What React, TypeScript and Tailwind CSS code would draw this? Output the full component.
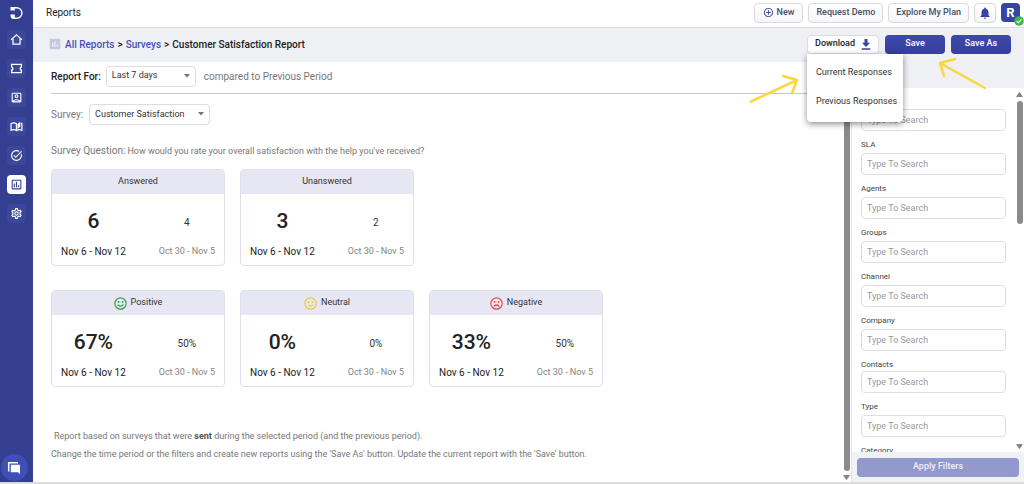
import type { ReactNode } from "react";
import {
  MdAddCircleOutline,
  MdInsertChart,
  MdNotifications,
  MdOutlineAccountBox,
  MdOutlineInsertChart,
  MdOutlineSettings,
  MdTaskAlt,
} from "react-icons/md";

const HomeIcon = () => (
  <svg viewBox="0 0 24 24" className="size-[13px]" fill="none" stroke="currentColor" strokeWidth="2.3">
    <path d="M2 12.500 12 3.500l10 9" />
    <path d="M5.500 10v10.500h13V10" />
  </svg>
);

const TicketIcon = () => (
  <svg viewBox="0 0 24 24" className="size-[13px]" fill="none" stroke="currentColor" strokeWidth="2.5">
    <path d="M3 4.500h18v4.300a3.400 3.400 0 0 0 0 6.400v4.300H3v-4.300a3.400 3.400 0 0 0 0-6.400z" />
  </svg>
);

const BookIcon = () => (
  <svg viewBox="0 0 24 24" className="size-[13px]" fill="none" stroke="currentColor" strokeWidth="2.200">
    <path d="M12 7C9 5 5 5 2 6.500v12.500c3-1.500 7-1.500 10 .5V7z" />
    <path d="M12 19.500c3-2 7-2 10-.5V6.500l-2-.8" />
    <path d="M14 7.500 19 3v9.500l-5 4z" fill="currentColor" stroke="none" />
    <path d="M12 7v12.500" />
  </svg>
);

const LogoIcon = () => (
  <svg viewBox="0 0 14 14" className="size-3.5" fill="none">
    <path d="M5 1.700h2.700a5.200 5.200 0 0 1 0 10.500H5" stroke="#fff" strokeWidth="1.400" />
    <path d="M1.500 1h4.300v3.500H1.500z" fill="#fff" />
    <path d="M1.500 8.600h4.300v4.300H5A3.500 3.500 0 0 1 1.500 9.400z" fill="#fff" />
  </svg>
);

const ChatIcon = () => (
  <svg viewBox="0 0 14 14" className="size-3.5" fill="none">
    <path d="M1.700 10.500V1.700h9.300" stroke="#fff" strokeWidth="1.500" />
    <path d="M3.800 3.800h9.200v9.400l-2-1.900H3.800z" fill="#fff" />
  </svg>
);

const DownloadIcon = () => (
  <svg viewBox="0 0 10 11" className="h-[11px] w-2.5 fill-[#3743a4]">
    <path d="M3.500 0h3v3.800h2.600L5 8 .9 3.800h2.600zM.7 9.200h8.600v1.600H.7z" />
  </svg>
);

const Face = ({ mouth, className }: { mouth: string; className: string }) => (
  <svg viewBox="0 0 13 13" className={`size-[13px] ${className}`} fill="none" stroke="currentColor" strokeWidth="1.200" strokeLinecap="round">
    <circle cx="6.500" cy="6.500" r="5.700" />
    <path d={mouth} />
    <circle cx="4.500" cy="5" r=".9" fill="currentColor" stroke="none" />
    <circle cx="8.500" cy="5" r=".9" fill="currentColor" stroke="none" />
  </svg>
);

const Caret = ({ className = "" }: { className?: string }) => (
  <svg viewBox="0 0 6 4" className={`h-1 w-1.5 fill-[#757575] ${className}`}>
    <path d="M0 0h6L3 3.500z" />
  </svg>
);

const ScrollArrow = ({ className = "" }: { className?: string }) => (
  <svg viewBox="0 0 7 5" className={`h-[5px] w-[7px] shrink-0 fill-[#858585] ${className}`}>
    <path d="M.8 0h5.400q.8 0 .4.700L4 4.600q-.5.600-1 0L.4.700Q0 0 .8 0z" />
  </svg>
);

const navItems: { label: string; icon: ReactNode; active?: boolean }[] = [
  { label: "Home", icon: <HomeIcon /> },
  { label: "Tickets", icon: <TicketIcon /> },
  { label: "Contacts", icon: <MdOutlineAccountBox className="size-[13px]" /> },
  { label: "Knowledge base", icon: <BookIcon /> },
  { label: "Tasks", icon: <MdTaskAlt className="size-[13px]" /> },
  { label: "Reports", icon: <MdOutlineInsertChart className="size-[13px]" />, active: true },
  { label: "Settings", icon: <MdOutlineSettings className="size-[13px]" /> },
];

function Sidebar() {
  return (
    <nav aria-label="Main" className="flex w-[33px] shrink-0 flex-col items-center bg-[#343f92] pr-px">
      <a href="#" aria-label="Dashboard" className="mt-1.5 mb-2.5">
        <LogoIcon />
      </a>
      <ul className="flex flex-col gap-2.5">
        {navItems.map((item) => (
          <li key={item.label}>
            <a
              href="#"
              aria-label={item.label}
              className={
                item.active
                  ? "flex size-[19px] items-center justify-center rounded bg-white text-[#343f92]"
                  : "flex size-[19px] items-center justify-center rounded bg-[#3b479b] text-white"
              }
            >
              {item.icon}
            </a>
          </li>
        ))}
      </ul>
      <button aria-label="Chat" className="mt-auto mr-1 mb-px flex size-[27px] items-center justify-center rounded-full bg-[#3f4fb5]">
        <ChatIcon />
      </button>
    </nav>
  );
}

const topButton =
  "flex h-5 items-center justify-center rounded border border-[#d9dadf] bg-linear-to-b from-white to-[#f6f6fa] text-[9px] font-medium text-[#4a4d66]";

function TopBar() {
  return (
    <header className="flex h-7 shrink-0 items-center justify-between border-b border-[#dcdde1] pr-1 pb-0.5 pl-[13px]">
      <h1 className="text-[10px] text-[#222]">Reports</h1>
      <div className="flex items-center gap-[5px]">
        <button className={`${topButton} gap-[3px] px-2`}>
          <MdAddCircleOutline className="size-[11px] text-[#3c4aa8]" />
          New
        </button>
        <button className={`${topButton} px-[7px]`}>Request Demo</button>
        <button className={`${topButton} px-[7px]`}>Explore My Plan</button>
        <button aria-label="Notifications" className={`${topButton} w-[22px]`}>
          <MdNotifications className="size-3.5 text-[#3743a4]" />
        </button>
        <button aria-label="Profile" className="relative flex size-[19px] items-center justify-center rounded bg-[#3743a4] text-[13px] font-bold text-white">
          R
          <svg viewBox="0 0 10 10" className="absolute -right-1 -bottom-1 size-2.5">
            <circle cx="5" cy="5" r="4.800" fill="#3fb54a" />
            <path d="m2.600 5.100 1.700 1.700 3.100-3.300" fill="none" stroke="#fff" strokeWidth="1.100" />
          </svg>
        </button>
      </div>
    </header>
  );
}

const primaryButton =
  "flex h-[19px] w-[60px] items-center justify-center rounded bg-linear-to-b from-[#3d48ad] to-[#36409a] text-[9px] font-medium text-white";

function DownloadMenu() {
  return (
    <div className="relative">
      <button
        aria-haspopup="menu"
        aria-expanded="true"
        className="flex h-[19px] w-[72px] items-center justify-center gap-1.5 rounded border border-[#dcdde1] bg-white text-[9px] font-medium text-[#222]"
      >
        Download
        <DownloadIcon />
      </button>
      <div role="menu" className="absolute top-full left-0 z-10 flex w-24 flex-col rounded-b bg-white py-[5px] text-[9px] whitespace-nowrap text-[#333] shadow-[0_2px_6px_rgba(0,0,0,0.45)]">
        <button role="menuitem" className="h-[29px] px-[9px] text-left">Current Responses</button>
        <button role="menuitem" className="h-[29px] px-[9px] text-left">Previous Responses</button>
      </div>
    </div>
  );
}

function BreadcrumbBar() {
  return (
    <div className="flex h-[34px] shrink-0 items-center justify-between bg-[#eff0f4] pr-[13px] pb-0.5 pl-[15px]">
      <nav aria-label="Breadcrumb" className="flex items-center gap-[3px] text-[10px] font-medium text-[#222]">
        <MdInsertChart className="size-3.5 text-[#c5c6df]" />
        <a href="#" className="text-[#4650b5]">All Reports</a>
        <span>&gt;</span>
        <a href="#" className="text-[#4650b5]">Surveys</a>
        <span>&gt;</span>
        <span>Customer Satisfaction Report</span>
      </nav>
      <div className="flex items-center gap-1.5">
        <DownloadMenu />
        <button className={primaryButton}>Save</button>
        <button className={primaryButton}>Save As</button>
      </div>
    </div>
  );
}

function Dropdown({ id, value, className }: { id: string; value: string; className: string }) {
  return (
    <div className={`relative ${className}`}>
      <select id={id} className="h-[21px] w-full appearance-none rounded border border-[#dedede] bg-white pl-[5px] text-[9px] text-[#333]">
        <option>{value}</option>
      </select>
      <Caret className="pointer-events-none absolute top-2 right-1.5" />
    </div>
  );
}

type Card = { title: string; icon?: ReactNode; current: string; previous: string };

const responseCards: Card[] = [
  { title: "Answered", current: "6", previous: "4" },
  { title: "Unanswered", current: "3", previous: "2" },
];

const sentimentCards: Card[] = [
  { title: "Positive", icon: <Face mouth="M4 8q2.500 2.400 5 0" className="text-[#35a04f]" />, current: "67%", previous: "50%" },
  { title: "Neutral", icon: <Face mouth="M4.400 8.300q2.100 1 4.200 0" className="text-[#efcb38]" />, current: "0%", previous: "0%" },
  { title: "Negative", icon: <Face mouth="M4 9.200q2.500-2.400 5 0" className="text-[#ee4a50]" />, current: "33%", previous: "50%" },
];

function StatCard({ title, icon, current, previous }: Card) {
  return (
    <section className="w-[174px] overflow-hidden rounded border border-[#dfe0ea]">
      <h2 className="flex h-6 items-center justify-center gap-1 bg-[#e7e7f3] text-[9px] text-[#333]">
        {icon}
        {title}
      </h2>
      <div className="flex h-[71px] justify-between px-[9px]">
        <div className="flex flex-col items-center">
          <span className="flex h-14 items-center text-[21px] font-medium text-[#222]">{current}</span>
          <span className="text-[10px] leading-[3px] text-[#222]">Nov 6 - Nov 12</span>
        </div>
        <div className="flex flex-col items-center">
          <span className="flex h-14 items-center text-[10px] text-[#333]">{previous}</span>
          <span className="text-[9px] leading-[3px] text-[#858585]">Oct 30 - Nov 5</span>
        </div>
      </div>
    </section>
  );
}

function Report() {
  return (
    <main className="min-w-0 flex-1 overflow-hidden pl-[18px] text-[#777]">
      <div className="flex h-8 items-center border-b border-[#c9c9c9] pb-[3px] text-[10px]">
        <label htmlFor="period" className="font-medium text-[#222]">Report For:</label>
        <Dropdown id="period" value="Last 7 days" className="ml-[5px] w-[90px]" />
        <span className="ml-2">compared to Previous Period</span>
      </div>
      <div className="mt-2.5 flex items-center text-[10px]">
        <label htmlFor="survey">Survey:</label>
        <Dropdown id="survey" value="Customer Satisfaction" className="ml-1.5 w-[121px]" />
      </div>
      <p className="mt-5 flex h-3 items-baseline gap-0.5 text-[10px] leading-3">
        Survey Question: <span className="text-[9px]">How would you rate your overall satisfaction with the help you've received?</span>
      </p>
      <div className="mt-3 flex flex-wrap gap-[15px]">
        {responseCards.map((card) => (
          <StatCard key={card.title} {...card} />
        ))}
      </div>
      <div className="mt-6 flex flex-wrap gap-[15px]">
        {sentimentCards.map((card) => (
          <StatCard key={card.title} {...card} />
        ))}
      </div>
      <div className="mt-10 text-[9px] leading-[18px]">
        <p className="pl-[3px]">
          Report based on surveys that were <b className="font-bold text-[#555]">sent</b> during the selected period (and the previous period).
        </p>
        <p>Change the time period or the filters and create new reports using the 'Save As' button. Update the current report with the 'Save' button.</p>
      </div>
    </main>
  );
}

const filters = ["Tags", "SLA", "Agents", "Groups", "Channel", "Company", "Contacts", "Type", "Category"];

function Filters() {
  return (
    <aside className="flex w-[173px] shrink-0 flex-col border-l border-[#e2e2e6]">
      <div className="h-[26px] shrink-0 bg-[#eff0f4]" />
      <div className="flex min-h-0 flex-1">
        <form className="min-h-0 flex-1 overflow-hidden pt-1.5 pl-[9px]">
          {filters.map((name) => (
            <div key={name} className={name === "Contacts" ? "flex h-[42px] flex-col" : "flex h-11 flex-col gap-0.5"}>
              <label htmlFor={name} className="text-[8px] leading-[13px] text-[#444]">{name}</label>
              <input
                id={name}
                type="text"
                placeholder="Type To Search"
                className="h-[22px] w-full rounded border border-[#dedede] bg-white px-[5px] text-[9px] placeholder:text-[#999]"
              />
            </div>
          ))}
        </form>
        <div aria-hidden="true" className="mr-px ml-2.5 flex w-[7px] flex-col items-center pt-1 pb-[3px]">
          <ScrollArrow className="rotate-180" />
          <div className="mt-1 h-[123px] w-1.5 rounded-full bg-[#8b8b8b]" />
          <ScrollArrow className="mt-auto" />
        </div>
      </div>
      <div className="flex h-[30px] shrink-0 items-center bg-[#f1f2f6] px-[5px]">
        <button className="h-[19px] w-full rounded bg-[#9399cd] text-[9px] font-medium text-[#eceefa]">Apply Filters</button>
      </div>
    </aside>
  );
}

function Annotations() {
  return (
    <svg viewBox="0 0 236 50" className="pointer-events-none absolute top-[55px] right-[38px] z-20 h-[50px] w-[236px]" fill="none" stroke="#fbd63c" strokeWidth="2.500" strokeLinecap="round" strokeLinejoin="round">
      <path d="M0 47 47 25M33 21l14 4-5 13" />
      <path d="m235 33-45-25M205 4l-15 4 4 13" />
    </svg>
  );
}

export default function App() {
  return (
    <div className="relative flex h-screen overflow-hidden border-b-2 border-[#dcdcdc] bg-white font-['Roboto',sans-serif]">
      <Sidebar />
      <div className="flex min-w-0 flex-1 flex-col">
        <TopBar />
        <BreadcrumbBar />
        <div className="flex min-h-0 flex-1">
          <Report />
          <div aria-hidden="true" className="flex w-[9px] shrink-0 flex-col items-center pb-0.5">
            <div className="mt-10 w-1.5 flex-1 rounded-full bg-[#8b8b8b]" />
            <ScrollArrow className="mt-1" />
          </div>
          <Filters />
        </div>
      </div>
      <Annotations />
    </div>
  );
}
